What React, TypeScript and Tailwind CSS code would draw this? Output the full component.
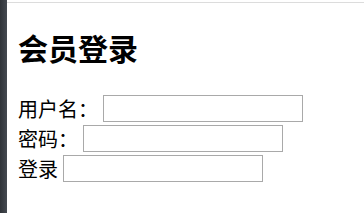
export default function App() {
  return (
    <div className="flex h-[213px] w-full bg-white" style={{ fontFamily: '"Noto Sans CJK SC", "Liberation Sans", sans-serif' }}>
      {/* 左侧深色边条 */}
      <div className="w-[7px] shrink-0 bg-gradient-to-r from-[#2f3338] to-[#454a51]" />

      <div className="flex-1">
        <div className="mt-[2px] h-px bg-[#dcdcdc]" />

        <div className="pl-[11px] pt-[25px]">
          <h2 className="text-[30px] font-bold leading-[38px] text-black">会员登录</h2>

          <form className="mt-[29px] flex flex-col gap-[3px] text-[20px] leading-[27px] text-black">
            <div className="flex items-center">
              <span>用户名：</span>
              <input type="text" className="ml-[5px] h-[27px] w-[200px] border border-[#a9a9a9] bg-white outline-none" />
            </div>
            <div className="flex items-center">
              <span>密码：</span>
              <input type="password" className="ml-[5px] h-[27px] w-[200px] border border-[#a9a9a9] bg-white outline-none" />
            </div>
            <div className="flex items-center">
              <span>登录</span>
              <input type="text" className="ml-[5px] h-[27px] w-[200px] border border-[#a9a9a9] bg-white outline-none" />
            </div>
          </form>
        </div>
      </div>
    </div>
  );
}
